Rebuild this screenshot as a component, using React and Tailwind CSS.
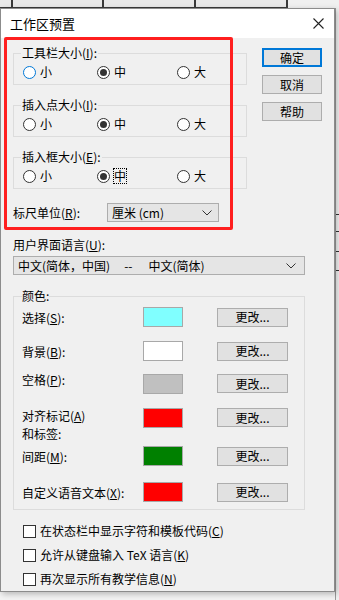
import React from 'react';

// ── small pieces ───────────────────────────────────────────────────────────
const K = ({ k }) => <span className="underline underline-offset-1">{k}</span>;

function Radio({ label, checked, hover, focus, w }) {
  return (
    <div className={`flex items-center gap-[4px] h-[14px] ${w}`}>
      <span className={`grid h-[13px] w-[13px] shrink-0 place-items-center rounded-full border bg-white ${hover ? 'border-[#0078d7]' : 'border-[#333]'}`}>
        {checked && <span className="h-[7px] w-[7px] rounded-full bg-[#333]" />}
      </span>
      <span className={`leading-[14px] ${focus ? 'outline outline-1 outline-dotted outline-black' : ''}`}>{label}</span>
    </div>
  );
}

function SizeGroup({ title, k, first, hover, focus }) {
  return (
    <fieldset className={`border border-[#dcdcdc] pl-[9px] pt-[5px] pb-[5px] ${first ? '' : 'mt-[13px]'}`}>
      <legend className="-ml-[2px] px-[1px] leading-[14px]">{title}(<K k={k} />):</legend>
      <div className="flex">
        <Radio label="小" hover={hover} w="w-[74px]" />
        <Radio label="中" checked focus={focus} w="w-[80px]" />
        <Radio label="大" />
      </div>
    </fieldset>
  );
}

const Chevron = () => (
  <svg width="10" height="6" viewBox="0 0 10 6" className="shrink-0">
    <path d="M0.5 0.5 L5 5 L9.5 0.5" fill="none" stroke="#333" strokeWidth="1" />
  </svg>
);

const Btn = ({ children, def, className = '' }) => (
  <div className={`grid place-items-center h-[19px] border bg-[#e1e1e1] leading-[14px] ${def ? 'border-[#0078d7] outline outline-1 outline-[#0078d7] -outline-offset-2' : 'border-[#adadad]'} ${className}`}>
    {children}
  </div>
);

const COLORS = [
  { label: <>选择(<K k="S" />):</>, c: 'bg-[#80ffff]', mt: '' },
  { label: <>背景(<K k="B" />):</>, c: 'bg-white', mt: 'mt-[14px]' },
  { label: <>空格(<K k="P" />):</>, c: 'bg-[#c0c0c0]', mt: 'mt-[13px]', top: true },
  { label: <>对齐标记(<K k="A" />)<br />和标签:</>, c: 'bg-[#ff0000]', mt: 'mt-[14px]', top: true, two: true },
  { label: <>间距(<K k="M" />):</>, c: 'bg-[#008000]', mt: 'mt-[18px]' },
  { label: <>自定义语音文本(<K k="X" />):</>, c: 'bg-[#ff0000]', mt: 'mt-[16px]' },
];

const CHECKS = [
  <>在状态栏中显示字符和模板代码(<K k="C" />)</>,
  <>允许从键盘输入 TeX 语言(<K k="K" />)</>,
  <>再次显示所有教学信息(<K k="N" />)</>,
];

// ── page ───────────────────────────────────────────────────────────────────
export default function App() {
  return (
    <div className="relative h-[600px] w-[339px] overflow-hidden bg-[#f3f3f3] text-[12px] text-black font-['Noto_Sans_CJK_SC','Noto_Sans',sans-serif]">
      {/* sheet behind the dialog */}
      <div className="flex h-[8px]">
        <div className="w-[13px] border-r-2 border-b border-[#3a3a3a] bg-[#e9e9e9]" />
        <div className="w-[91px] border-r-2 border-b border-[#3a3a3a] bg-[#e9e9e9]" />
        <div className="w-[92px] border-r-2 border-b border-[#3a3a3a] bg-[#e9e9e9]" />
        <div className="w-[92px] border-r-2 border-b border-[#3a3a3a] bg-[#e9e9e9]" />
        <div className="flex-1 bg-[#f0f0f0]" />
      </div>
      <div className="absolute right-0 top-[8px] h-[592px] w-[4px] border-l border-[#9a9a9a] bg-[#f0f0f0]">
        <div className="mt-[206px] h-px w-[3px] bg-[#333]" />
        <div className="mt-[16px] h-px w-[3px] bg-[#333]" />
        <div className="mt-[19px] h-px w-[3px] bg-[#333]" />
        <div className="mt-[18px] h-px w-[3px] bg-[#333]" />
      </div>

      {/* dialog */}
      <div className="relative w-[335px] border border-[#8c8c8c] bg-[#f0f0f0] shadow-[2px_2px_6px_rgba(0,0,0,0.25)]">
        <div className="flex h-[29px] items-center justify-between bg-white pl-[9px] pr-[10px]">
          <span className="text-[13px] leading-[16px]">工作区预置</span>
          <svg width="11" height="11" viewBox="0 0 11 11">
            <path d="M0.5 0.5 L10.5 10.5 M10.5 0.5 L0.5 10.5" stroke="#222" strokeWidth="1.1" />
          </svg>
        </div>

        <div className="pl-[12px] pt-[8px] pb-[5px]">
          <div className="flex">
            <div className="w-[234px]">
              <SizeGroup title="工具栏大小" k="I" first hover />
              <SizeGroup title="插入点大小" k="I" />
              <SizeGroup title="插入框大小" k="E" focus />
              <div className="mt-[14px] flex items-center">
                <span className="w-[94px] leading-[14px]">标尺单位(<K k="R" />):</span>
                <div className="flex h-[19px] w-[112px] items-center justify-between border border-[#adadad] bg-[#e5e5e5] pl-[4px] pr-[6px]">
                  <span className="leading-[14px]">厘米 (cm)</span>
                  <Chevron />
                </div>
              </div>
            </div>
            <div className="ml-[15px] mt-[2px] flex w-[60px] flex-col gap-[8px]">
              <Btn def>确定</Btn>
              <Btn>取消</Btn>
              <Btn>帮助</Btn>
            </div>
          </div>

          <div className="mt-[16px] leading-[14px]">用户界面语言(<K k="U" />):</div>
          <div className="mt-[4px] flex h-[19px] w-[292px] items-center border border-[#adadad] bg-[#e5e5e5] pl-[4px] pr-[8px]">
            <span className="leading-[14px]">中文(简体，中国)</span>
            <span className="ml-[14px] leading-[14px]">--</span>
            <span className="ml-[16px] leading-[14px]">中文(简体)</span>
            <span className="ml-auto"><Chevron /></span>
          </div>

          <fieldset className="mt-[14px] w-[292px] border border-[#dcdcdc] pl-[8px] pt-[4px] pb-[7px]">
            <legend className="px-0 leading-[14px]">颜色:</legend>
            {COLORS.map((r, i) => (
              <div key={i} className={`flex h-[20px] ${r.top ? 'items-start' : 'items-center'} ${r.mt}`}>
                <span className={`w-[121px] ${r.two ? 'leading-[18px] -mt-[1px]' : 'leading-[13px]'} ${r.top && !r.two ? '-mt-[1px]' : ''}`}>{r.label}</span>
                <span className={`h-[20px] w-[40px] border border-[#a8a8a8] ${r.c}`} />
                <Btn className="ml-[34px] w-[71px]">更改...</Btn>
              </div>
            ))}
          </fieldset>

          <div className="mt-[14px] flex flex-col gap-[10px] pl-[10px]">
            {CHECKS.map((t, i) => (
              <div key={i} className="flex h-[14px] items-center gap-[4px]">
                <span className="h-[13px] w-[13px] shrink-0 border border-[#333] bg-white" />
                <span className="leading-[14px]">{t}</span>
              </div>
            ))}
          </div>
        </div>
      </div>

      {/* red annotation box */}
      <div className="absolute left-[4px] top-[37px] h-[193px] w-[229px] rounded-[2px] border-[3px] border-[#ff1f1f]" />
    </div>
  );
}
